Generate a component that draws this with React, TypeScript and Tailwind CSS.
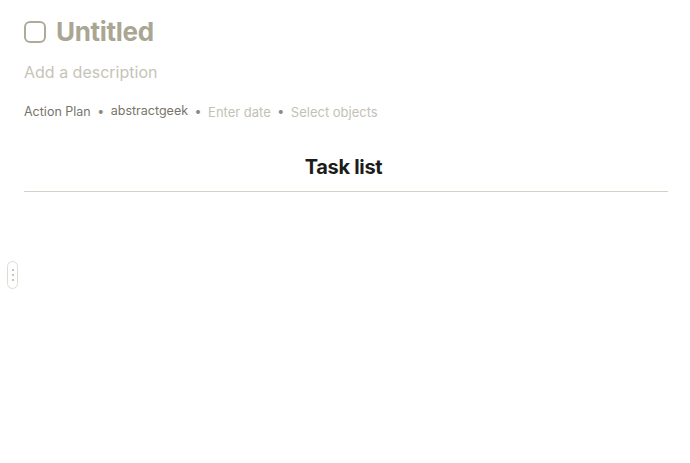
export default function App() {
  return (
    <div className="relative h-[463px] w-[690px] bg-white font-['Inter',sans-serif]">
      <main className="pl-6 pr-[22px] pt-[21px]">
        <div className="flex items-center gap-[10px]">
          <span className="h-[22px] w-[22px] rounded-[6px] border-2 border-[#aeab9b]" />
          <h1 className="text-[26px] font-bold leading-[22px] tracking-[-0.3px] text-[#a9a693]">Untitled</h1>
        </div>
        <p className="mt-[19px] text-[16px] leading-5 text-[#c6c4b8]">Add a description</p>
        <div className="mt-[22px] flex items-center gap-[6.5px] text-[12.5px] leading-4">
          <span className="text-[#77746a]">Action Plan</span>
          <span className="text-[#8e8b80]">•</span>
          <span className="-mt-[2px] text-[#77746a]">abstractgeek</span>
          <span className="text-[#8e8b80]">•</span>
          <span className="text-[13px] text-[#c3c1b5]">Enter date</span>
          <span className="text-[#8e8b80]">•</span>
          <span className="text-[13px] text-[#c3c1b5]">Select objects</span>
        </div>
        <section className="mt-[35px]">
          <h2 className="pr-[5px] text-center text-[20px] font-bold leading-6 tracking-[-0.3px] text-[#1c1c1a]">Task list</h2>
          <div className="mt-[12px] border-t border-[#d3d1c5]" />
        </section>
      </main>
      <div className="absolute left-[7px] top-[261px] flex h-[28px] w-[11px] flex-col items-center justify-center gap-[3px] rounded-full border border-[#dddcd3]">
        <span className="h-[2px] w-[2px] rounded-full bg-[#b5b3a8]" />
        <span className="h-[2px] w-[2px] rounded-full bg-[#b5b3a8]" />
        <span className="h-[2px] w-[2px] rounded-full bg-[#b5b3a8]" />
      </div>
    </div>
  );
}
